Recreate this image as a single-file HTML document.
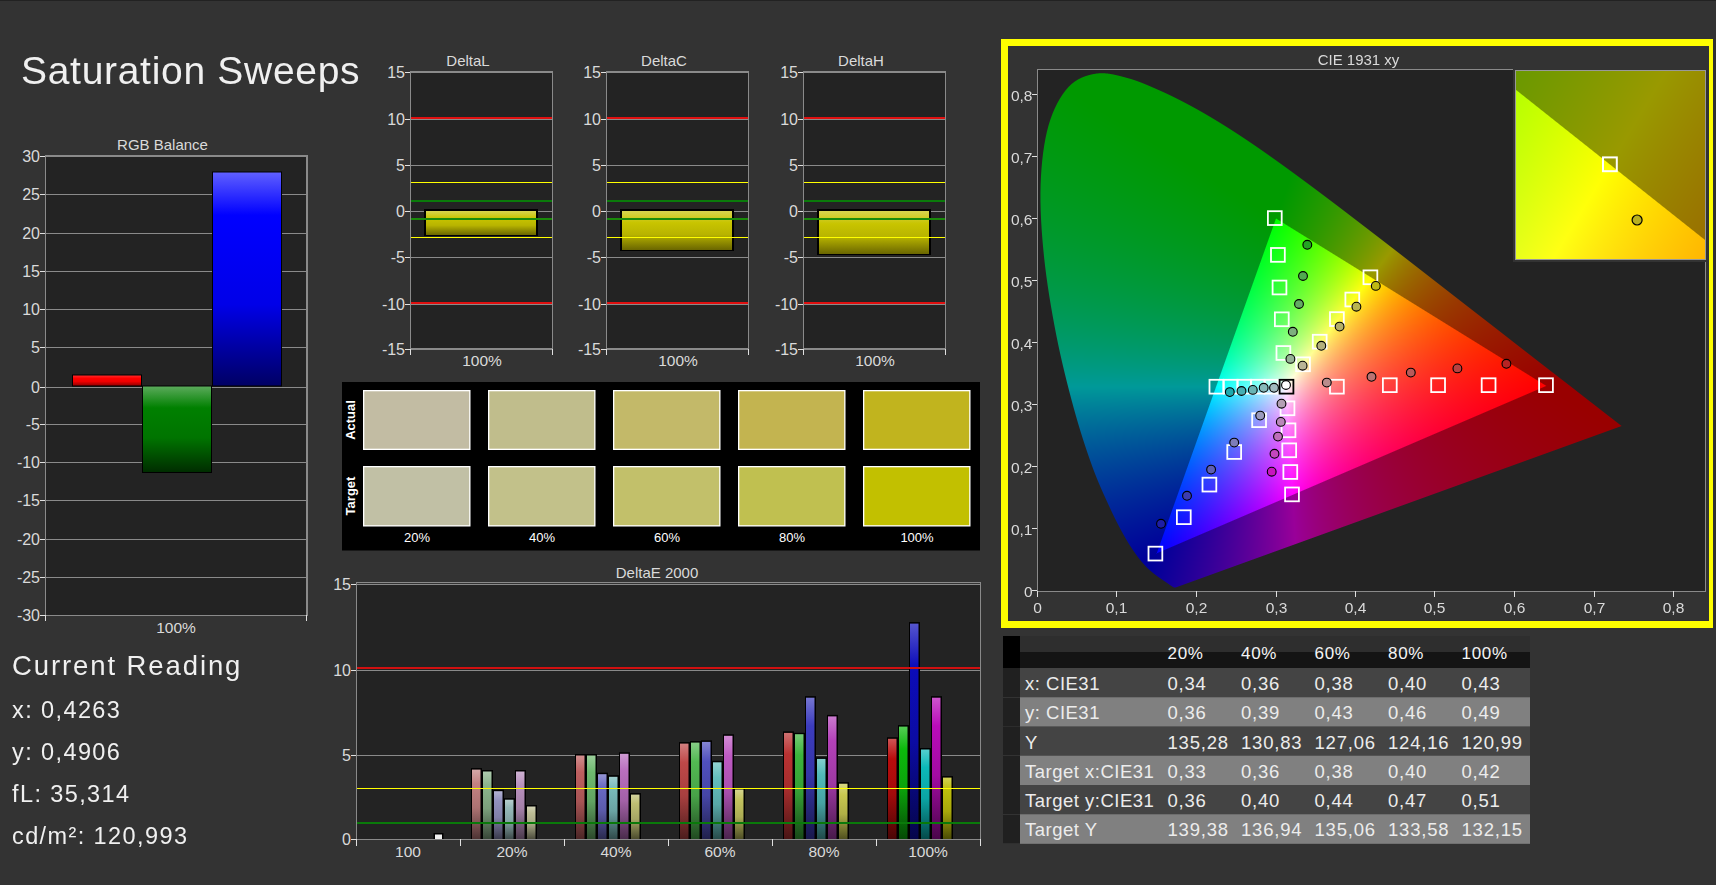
<!DOCTYPE html>
<html><head><meta charset="utf-8">
<style>
html,body{margin:0;padding:0;}
body{width:1716px;height:885px;background:#333333;position:relative;overflow:hidden;font-family:"Liberation Sans", sans-serif;}
.abs{position:absolute;left:0;top:0;}
svg text{font-family:"Liberation Sans", sans-serif;}
#topbar{position:absolute;left:0;top:0;width:1716px;height:1px;background:#222;}
#title{position:absolute;left:21px;top:48.5px;font-size:39px;color:#f0f0f0;white-space:nowrap;letter-spacing:0.7px;}
#cr{position:absolute;left:12px;top:650px;font-size:27.5px;color:#f0f0f0;white-space:nowrap;letter-spacing:1.9px;}
.rd{position:absolute;left:12px;font-size:23.5px;color:#f0f0f0;white-space:nowrap;letter-spacing:1.4px;}
#cie{position:absolute;left:1037px;top:69px;}
#inset{position:absolute;left:1515px;top:70px;}
</style></head><body>
<div id="topbar"></div>
<svg class="abs" width="1716" height="885">
<defs><linearGradient id="g1" x1="0" y1="0" x2="0" y2="1"><stop offset="0" stop-color="#ff2828"/><stop offset="0.3" stop-color="#ff0000"/><stop offset="0.6" stop-color="#ef0000"/><stop offset="1" stop-color="#960000"/></linearGradient><linearGradient id="g2" x1="0" y1="0" x2="0" y2="1"><stop offset="0" stop-color="#5aaa5a"/><stop offset="0.25" stop-color="#008000"/><stop offset="0.6" stop-color="#007400"/><stop offset="1" stop-color="#002d00"/></linearGradient><linearGradient id="g3" x1="0" y1="0" x2="0" y2="1"><stop offset="0" stop-color="#5f5fff"/><stop offset="0.2" stop-color="#0000ff"/><stop offset="0.62" stop-color="#0000e8"/><stop offset="1" stop-color="#000064"/></linearGradient><linearGradient id="g4" x1="0" y1="0" x2="0" y2="1"><stop offset="0" stop-color="#d8d450"/><stop offset="0.3" stop-color="#c8c400"/><stop offset="0.6" stop-color="#b8b400"/><stop offset="1" stop-color="#6a6600"/></linearGradient><linearGradient id="g5" x1="0" y1="0" x2="0" y2="1"><stop offset="0" stop-color="#d8d450"/><stop offset="0.3" stop-color="#c8c400"/><stop offset="0.6" stop-color="#b8b400"/><stop offset="1" stop-color="#6a6600"/></linearGradient><linearGradient id="g6" x1="0" y1="0" x2="0" y2="1"><stop offset="0" stop-color="#d8d450"/><stop offset="0.3" stop-color="#c8c400"/><stop offset="0.6" stop-color="#b8b400"/><stop offset="1" stop-color="#6a6600"/></linearGradient><linearGradient id="g7" x1="0" y1="0" x2="0" y2="1"><stop offset="0" stop-color="#d5a8a8"/><stop offset="0.2" stop-color="#c38282"/><stop offset="0.55" stop-color="#ac7272"/><stop offset="1" stop-color="#4e3434"/></linearGradient><linearGradient id="g8" x1="0" y1="0" x2="0" y2="1"><stop offset="0" stop-color="#aecaae"/><stop offset="0.2" stop-color="#8cb48c"/><stop offset="0.55" stop-color="#7b9e7b"/><stop offset="1" stop-color="#384838"/></linearGradient><linearGradient id="g9" x1="0" y1="0" x2="0" y2="1"><stop offset="0" stop-color="#b2b2d2"/><stop offset="0.2" stop-color="#9191be"/><stop offset="0.55" stop-color="#8080a7"/><stop offset="1" stop-color="#3a3a4c"/></linearGradient><linearGradient id="g10" x1="0" y1="0" x2="0" y2="1"><stop offset="0" stop-color="#b6cece"/><stop offset="0.2" stop-color="#96b9b9"/><stop offset="0.55" stop-color="#84a3a3"/><stop offset="1" stop-color="#3c4a4a"/></linearGradient><linearGradient id="g11" x1="0" y1="0" x2="0" y2="1"><stop offset="0" stop-color="#ceb2d2"/><stop offset="0.2" stop-color="#b991be"/><stop offset="0.55" stop-color="#a380a7"/><stop offset="1" stop-color="#4a3a4c"/></linearGradient><linearGradient id="g12" x1="0" y1="0" x2="0" y2="1"><stop offset="0" stop-color="#d2d2b6"/><stop offset="0.2" stop-color="#bebe96"/><stop offset="0.55" stop-color="#a7a784"/><stop offset="1" stop-color="#4c4c3c"/></linearGradient><linearGradient id="g13" x1="0" y1="0" x2="0" y2="1"><stop offset="0" stop-color="#d28f8f"/><stop offset="0.2" stop-color="#be5f5f"/><stop offset="0.55" stop-color="#a75454"/><stop offset="1" stop-color="#4c2626"/></linearGradient><linearGradient id="g14" x1="0" y1="0" x2="0" y2="1"><stop offset="0" stop-color="#9ace9a"/><stop offset="0.2" stop-color="#6eb96e"/><stop offset="0.55" stop-color="#61a361"/><stop offset="1" stop-color="#2c4a2c"/></linearGradient><linearGradient id="g15" x1="0" y1="0" x2="0" y2="1"><stop offset="0" stop-color="#9696d5"/><stop offset="0.2" stop-color="#6969c3"/><stop offset="0.55" stop-color="#5c5cac"/><stop offset="1" stop-color="#2a2a4e"/></linearGradient><linearGradient id="g16" x1="0" y1="0" x2="0" y2="1"><stop offset="0" stop-color="#a0cece"/><stop offset="0.2" stop-color="#78b9b9"/><stop offset="0.55" stop-color="#6aa3a3"/><stop offset="1" stop-color="#304a4a"/></linearGradient><linearGradient id="g17" x1="0" y1="0" x2="0" y2="1"><stop offset="0" stop-color="#ce9ad2"/><stop offset="0.2" stop-color="#b96ebe"/><stop offset="0.55" stop-color="#a361a7"/><stop offset="1" stop-color="#4a2c4c"/></linearGradient><linearGradient id="g18" x1="0" y1="0" x2="0" y2="1"><stop offset="0" stop-color="#d2d29d"/><stop offset="0.2" stop-color="#bebe73"/><stop offset="0.55" stop-color="#a7a765"/><stop offset="1" stop-color="#4c4c2e"/></linearGradient><linearGradient id="g19" x1="0" y1="0" x2="0" y2="1"><stop offset="0" stop-color="#d27f7f"/><stop offset="0.2" stop-color="#be4848"/><stop offset="0.55" stop-color="#a73f3f"/><stop offset="1" stop-color="#4c1d1d"/></linearGradient><linearGradient id="g20" x1="0" y1="0" x2="0" y2="1"><stop offset="0" stop-color="#86ce86"/><stop offset="0.2" stop-color="#52b952"/><stop offset="0.55" stop-color="#48a348"/><stop offset="1" stop-color="#214a21"/></linearGradient><linearGradient id="g21" x1="0" y1="0" x2="0" y2="1"><stop offset="0" stop-color="#8484d2"/><stop offset="0.2" stop-color="#5050be"/><stop offset="0.55" stop-color="#4646a7"/><stop offset="1" stop-color="#20204c"/></linearGradient><linearGradient id="g22" x1="0" y1="0" x2="0" y2="1"><stop offset="0" stop-color="#92d2d2"/><stop offset="0.2" stop-color="#64bebe"/><stop offset="0.55" stop-color="#58a7a7"/><stop offset="1" stop-color="#284c4c"/></linearGradient><linearGradient id="g23" x1="0" y1="0" x2="0" y2="1"><stop offset="0" stop-color="#d28cd5"/><stop offset="0.2" stop-color="#be5ac3"/><stop offset="0.55" stop-color="#a74fac"/><stop offset="1" stop-color="#4c244e"/></linearGradient><linearGradient id="g24" x1="0" y1="0" x2="0" y2="1"><stop offset="0" stop-color="#d5d58f"/><stop offset="0.2" stop-color="#c3c35f"/><stop offset="0.55" stop-color="#acac54"/><stop offset="1" stop-color="#4e4e26"/></linearGradient><linearGradient id="g25" x1="0" y1="0" x2="0" y2="1"><stop offset="0" stop-color="#ce7070"/><stop offset="0.2" stop-color="#b93232"/><stop offset="0.55" stop-color="#a32c2c"/><stop offset="1" stop-color="#4a1414"/></linearGradient><linearGradient id="g26" x1="0" y1="0" x2="0" y2="1"><stop offset="0" stop-color="#76ca76"/><stop offset="0.2" stop-color="#3cb43c"/><stop offset="0.55" stop-color="#359e35"/><stop offset="1" stop-color="#184818"/></linearGradient><linearGradient id="g27" x1="0" y1="0" x2="0" y2="1"><stop offset="0" stop-color="#7676d2"/><stop offset="0.2" stop-color="#3c3cbe"/><stop offset="0.55" stop-color="#3535a7"/><stop offset="1" stop-color="#18184c"/></linearGradient><linearGradient id="g28" x1="0" y1="0" x2="0" y2="1"><stop offset="0" stop-color="#84cece"/><stop offset="0.2" stop-color="#50b9b9"/><stop offset="0.55" stop-color="#46a3a3"/><stop offset="1" stop-color="#204a4a"/></linearGradient><linearGradient id="g29" x1="0" y1="0" x2="0" y2="1"><stop offset="0" stop-color="#ca7ace"/><stop offset="0.2" stop-color="#b441b9"/><stop offset="0.55" stop-color="#9e39a3"/><stop offset="1" stop-color="#481a4a"/></linearGradient><linearGradient id="g30" x1="0" y1="0" x2="0" y2="1"><stop offset="0" stop-color="#d8d884"/><stop offset="0.2" stop-color="#c8c850"/><stop offset="0.55" stop-color="#b0b046"/><stop offset="1" stop-color="#505020"/></linearGradient><linearGradient id="g31" x1="0" y1="0" x2="0" y2="1"><stop offset="0" stop-color="#ce5555"/><stop offset="0.2" stop-color="#b90c0c"/><stop offset="0.55" stop-color="#a30b0b"/><stop offset="1" stop-color="#4a0505"/></linearGradient><linearGradient id="g32" x1="0" y1="0" x2="0" y2="1"><stop offset="0" stop-color="#55ce55"/><stop offset="0.2" stop-color="#0cb90c"/><stop offset="0.55" stop-color="#0ba30b"/><stop offset="1" stop-color="#054a05"/></linearGradient><linearGradient id="g33" x1="0" y1="0" x2="0" y2="1"><stop offset="0" stop-color="#5555ce"/><stop offset="0.2" stop-color="#0c0cb9"/><stop offset="0.55" stop-color="#0b0ba3"/><stop offset="1" stop-color="#05054a"/></linearGradient><linearGradient id="g34" x1="0" y1="0" x2="0" y2="1"><stop offset="0" stop-color="#55cece"/><stop offset="0.2" stop-color="#0cb9b9"/><stop offset="0.55" stop-color="#0ba3a3"/><stop offset="1" stop-color="#054a4a"/></linearGradient><linearGradient id="g35" x1="0" y1="0" x2="0" y2="1"><stop offset="0" stop-color="#ce55ce"/><stop offset="0.2" stop-color="#b90cb9"/><stop offset="0.55" stop-color="#a30ba3"/><stop offset="1" stop-color="#4a054a"/></linearGradient><linearGradient id="g36" x1="0" y1="0" x2="0" y2="1"><stop offset="0" stop-color="#d2d255"/><stop offset="0.2" stop-color="#bebe0c"/><stop offset="0.55" stop-color="#a7a70b"/><stop offset="1" stop-color="#4c4c05"/></linearGradient></defs>
<rect x="45" y="156" width="262" height="459" fill="#232323"/>
<rect x="45" y="577" width="262" height="1" fill="#8a8a8a"/>
<rect x="45" y="539" width="262" height="1" fill="#8a8a8a"/>
<rect x="45" y="500" width="262" height="1" fill="#8a8a8a"/>
<rect x="45" y="462" width="262" height="1" fill="#8a8a8a"/>
<rect x="45" y="424" width="262" height="1" fill="#8a8a8a"/>
<rect x="45" y="387" width="262" height="1" fill="#8a8a8a"/>
<rect x="45" y="347" width="262" height="1" fill="#8a8a8a"/>
<rect x="45" y="309" width="262" height="1" fill="#8a8a8a"/>
<rect x="45" y="271" width="262" height="1" fill="#8a8a8a"/>
<rect x="45" y="233" width="262" height="1" fill="#8a8a8a"/>
<rect x="45" y="194" width="262" height="1" fill="#8a8a8a"/>
<rect x="72" y="374.5" width="70" height="12.0" fill="#000"/>
<rect x="73.0" y="375.5" width="68" height="10.0" fill="url(#g1)"/>
<rect x="142" y="385.5" width="70" height="87.5" fill="#000"/>
<rect x="143.0" y="386.5" width="68" height="85.5" fill="url(#g2)"/>
<rect x="212" y="171.5" width="70" height="215.0" fill="#000"/>
<rect x="213.0" y="172.5" width="68" height="213.0" fill="url(#g3)"/>
<rect x="45" y="155" width="263" height="2" fill="#8a8a8a"/>
<rect x="45" y="155" width="1" height="461" fill="#8a8a8a"/>
<rect x="306" y="155" width="2" height="461" fill="#8a8a8a"/>
<rect x="45" y="615" width="263" height="1" fill="#8a8a8a"/>
<rect x="40" y="615" width="5" height="1" fill="#e0e0e0"/>
<text x="40" y="621" font-size="16" text-anchor="end" fill="#dadada" >-30</text>
<rect x="40" y="577" width="5" height="1" fill="#e0e0e0"/>
<text x="40" y="583" font-size="16" text-anchor="end" fill="#dadada" >-25</text>
<rect x="40" y="539" width="5" height="1" fill="#e0e0e0"/>
<text x="40" y="545" font-size="16" text-anchor="end" fill="#dadada" >-20</text>
<rect x="40" y="500" width="5" height="1" fill="#e0e0e0"/>
<text x="40" y="506" font-size="16" text-anchor="end" fill="#dadada" >-15</text>
<rect x="40" y="462" width="5" height="1" fill="#e0e0e0"/>
<text x="40" y="468" font-size="16" text-anchor="end" fill="#dadada" >-10</text>
<rect x="40" y="424" width="5" height="1" fill="#e0e0e0"/>
<text x="40" y="430" font-size="16" text-anchor="end" fill="#dadada" >-5</text>
<rect x="40" y="387" width="5" height="1" fill="#e0e0e0"/>
<text x="40" y="393" font-size="16" text-anchor="end" fill="#dadada" >0</text>
<rect x="40" y="347" width="5" height="1" fill="#e0e0e0"/>
<text x="40" y="353" font-size="16" text-anchor="end" fill="#dadada" >5</text>
<rect x="40" y="309" width="5" height="1" fill="#e0e0e0"/>
<text x="40" y="315" font-size="16" text-anchor="end" fill="#dadada" >10</text>
<rect x="40" y="271" width="5" height="1" fill="#e0e0e0"/>
<text x="40" y="277" font-size="16" text-anchor="end" fill="#dadada" >15</text>
<rect x="40" y="233" width="5" height="1" fill="#e0e0e0"/>
<text x="40" y="239" font-size="16" text-anchor="end" fill="#dadada" >20</text>
<rect x="40" y="194" width="5" height="1" fill="#e0e0e0"/>
<text x="40" y="200" font-size="16" text-anchor="end" fill="#dadada" >25</text>
<rect x="40" y="156" width="5" height="1" fill="#e0e0e0"/>
<text x="40" y="162" font-size="16" text-anchor="end" fill="#dadada" >30</text>
<rect x="45" y="615" width="1" height="6" fill="#e0e0e0"/>
<rect x="306" y="615" width="1" height="6" fill="#e0e0e0"/>
<text x="176" y="632.5" font-size="15.5" text-anchor="middle" fill="#dadada" >100%</text>
<text x="162.5" y="150" font-size="15" text-anchor="middle" fill="#dadada" >RGB Balance</text>
<rect x="410" y="72" width="142" height="277" fill="#232323"/>
<rect x="410" y="119" width="142" height="1" fill="#8a8a8a"/>
<rect x="410" y="165" width="142" height="1" fill="#8a8a8a"/>
<rect x="410" y="211" width="142" height="1" fill="#8a8a8a"/>
<rect x="410" y="257" width="142" height="1" fill="#8a8a8a"/>
<rect x="410" y="304" width="142" height="1" fill="#8a8a8a"/>
<rect x="424" y="209" width="114" height="27" fill="#000"/>
<rect x="426" y="211" width="110" height="24" fill="url(#g4)"/>
<rect x="410" y="117" width="142" height="2" fill="#e01010"/>
<rect x="410" y="302" width="142" height="2" fill="#e01010"/>
<rect x="410" y="182" width="142" height="1" fill="#ffff00"/>
<rect x="410" y="237" width="142" height="1" fill="#ffff00"/>
<rect x="410" y="200" width="142" height="2" fill="#0a7a0a"/>
<rect x="410" y="218" width="142" height="2" fill="#1a8a0a"/>
<rect x="410" y="71" width="143" height="2" fill="#8a8a8a"/>
<rect x="410" y="71" width="1" height="279" fill="#8a8a8a"/>
<rect x="552" y="71" width="1" height="279" fill="#8a8a8a"/>
<rect x="410" y="348" width="143" height="2" fill="#8a8a8a"/>
<rect x="405" y="72" width="5" height="1" fill="#e0e0e0"/>
<text x="405" y="78" font-size="16" text-anchor="end" fill="#dadada" >15</text>
<rect x="405" y="119" width="5" height="1" fill="#e0e0e0"/>
<text x="405" y="125" font-size="16" text-anchor="end" fill="#dadada" >10</text>
<rect x="405" y="165" width="5" height="1" fill="#e0e0e0"/>
<text x="405" y="171" font-size="16" text-anchor="end" fill="#dadada" >5</text>
<rect x="405" y="211" width="5" height="1" fill="#e0e0e0"/>
<text x="405" y="217" font-size="16" text-anchor="end" fill="#dadada" >0</text>
<rect x="405" y="257" width="5" height="1" fill="#e0e0e0"/>
<text x="405" y="263" font-size="16" text-anchor="end" fill="#dadada" >-5</text>
<rect x="405" y="304" width="5" height="1" fill="#e0e0e0"/>
<text x="405" y="310" font-size="16" text-anchor="end" fill="#dadada" >-10</text>
<rect x="405" y="349" width="5" height="1" fill="#e0e0e0"/>
<text x="405" y="355" font-size="16" text-anchor="end" fill="#dadada" >-15</text>
<rect x="410" y="349" width="1" height="6" fill="#e0e0e0"/>
<rect x="552" y="349" width="1" height="6" fill="#e0e0e0"/>
<text x="482.0" y="365.5" font-size="15.5" text-anchor="middle" fill="#dadada" >100%</text>
<text x="468" y="66" font-size="15" text-anchor="middle" fill="#dadada" >DeltaL</text>
<rect x="606" y="72" width="142" height="277" fill="#232323"/>
<rect x="606" y="119" width="142" height="1" fill="#8a8a8a"/>
<rect x="606" y="165" width="142" height="1" fill="#8a8a8a"/>
<rect x="606" y="211" width="142" height="1" fill="#8a8a8a"/>
<rect x="606" y="257" width="142" height="1" fill="#8a8a8a"/>
<rect x="606" y="304" width="142" height="1" fill="#8a8a8a"/>
<rect x="620" y="209" width="114" height="42" fill="#000"/>
<rect x="622" y="211" width="110" height="39" fill="url(#g5)"/>
<rect x="606" y="117" width="142" height="2" fill="#e01010"/>
<rect x="606" y="302" width="142" height="2" fill="#e01010"/>
<rect x="606" y="182" width="142" height="1" fill="#ffff00"/>
<rect x="606" y="237" width="142" height="1" fill="#ffff00"/>
<rect x="606" y="200" width="142" height="2" fill="#0a7a0a"/>
<rect x="606" y="218" width="142" height="2" fill="#1a8a0a"/>
<rect x="606" y="71" width="143" height="2" fill="#8a8a8a"/>
<rect x="606" y="71" width="1" height="279" fill="#8a8a8a"/>
<rect x="748" y="71" width="1" height="279" fill="#8a8a8a"/>
<rect x="606" y="348" width="143" height="2" fill="#8a8a8a"/>
<rect x="601" y="72" width="5" height="1" fill="#e0e0e0"/>
<text x="601" y="78" font-size="16" text-anchor="end" fill="#dadada" >15</text>
<rect x="601" y="119" width="5" height="1" fill="#e0e0e0"/>
<text x="601" y="125" font-size="16" text-anchor="end" fill="#dadada" >10</text>
<rect x="601" y="165" width="5" height="1" fill="#e0e0e0"/>
<text x="601" y="171" font-size="16" text-anchor="end" fill="#dadada" >5</text>
<rect x="601" y="211" width="5" height="1" fill="#e0e0e0"/>
<text x="601" y="217" font-size="16" text-anchor="end" fill="#dadada" >0</text>
<rect x="601" y="257" width="5" height="1" fill="#e0e0e0"/>
<text x="601" y="263" font-size="16" text-anchor="end" fill="#dadada" >-5</text>
<rect x="601" y="304" width="5" height="1" fill="#e0e0e0"/>
<text x="601" y="310" font-size="16" text-anchor="end" fill="#dadada" >-10</text>
<rect x="601" y="349" width="5" height="1" fill="#e0e0e0"/>
<text x="601" y="355" font-size="16" text-anchor="end" fill="#dadada" >-15</text>
<rect x="606" y="349" width="1" height="6" fill="#e0e0e0"/>
<rect x="748" y="349" width="1" height="6" fill="#e0e0e0"/>
<text x="678.0" y="365.5" font-size="15.5" text-anchor="middle" fill="#dadada" >100%</text>
<text x="664" y="66" font-size="15" text-anchor="middle" fill="#dadada" >DeltaC</text>
<rect x="803" y="72" width="142" height="277" fill="#232323"/>
<rect x="803" y="119" width="142" height="1" fill="#8a8a8a"/>
<rect x="803" y="165" width="142" height="1" fill="#8a8a8a"/>
<rect x="803" y="211" width="142" height="1" fill="#8a8a8a"/>
<rect x="803" y="257" width="142" height="1" fill="#8a8a8a"/>
<rect x="803" y="304" width="142" height="1" fill="#8a8a8a"/>
<rect x="817" y="209" width="114" height="46" fill="#000"/>
<rect x="819" y="211" width="110" height="43" fill="url(#g6)"/>
<rect x="803" y="117" width="142" height="2" fill="#e01010"/>
<rect x="803" y="302" width="142" height="2" fill="#e01010"/>
<rect x="803" y="182" width="142" height="1" fill="#ffff00"/>
<rect x="803" y="237" width="142" height="1" fill="#ffff00"/>
<rect x="803" y="200" width="142" height="2" fill="#0a7a0a"/>
<rect x="803" y="218" width="142" height="2" fill="#1a8a0a"/>
<rect x="803" y="71" width="143" height="2" fill="#8a8a8a"/>
<rect x="803" y="71" width="1" height="279" fill="#8a8a8a"/>
<rect x="945" y="71" width="1" height="279" fill="#8a8a8a"/>
<rect x="803" y="348" width="143" height="2" fill="#8a8a8a"/>
<rect x="798" y="72" width="5" height="1" fill="#e0e0e0"/>
<text x="798" y="78" font-size="16" text-anchor="end" fill="#dadada" >15</text>
<rect x="798" y="119" width="5" height="1" fill="#e0e0e0"/>
<text x="798" y="125" font-size="16" text-anchor="end" fill="#dadada" >10</text>
<rect x="798" y="165" width="5" height="1" fill="#e0e0e0"/>
<text x="798" y="171" font-size="16" text-anchor="end" fill="#dadada" >5</text>
<rect x="798" y="211" width="5" height="1" fill="#e0e0e0"/>
<text x="798" y="217" font-size="16" text-anchor="end" fill="#dadada" >0</text>
<rect x="798" y="257" width="5" height="1" fill="#e0e0e0"/>
<text x="798" y="263" font-size="16" text-anchor="end" fill="#dadada" >-5</text>
<rect x="798" y="304" width="5" height="1" fill="#e0e0e0"/>
<text x="798" y="310" font-size="16" text-anchor="end" fill="#dadada" >-10</text>
<rect x="798" y="349" width="5" height="1" fill="#e0e0e0"/>
<text x="798" y="355" font-size="16" text-anchor="end" fill="#dadada" >-15</text>
<rect x="803" y="349" width="1" height="6" fill="#e0e0e0"/>
<rect x="945" y="349" width="1" height="6" fill="#e0e0e0"/>
<text x="875.0" y="365.5" font-size="15.5" text-anchor="middle" fill="#dadada" >100%</text>
<text x="861" y="66" font-size="15" text-anchor="middle" fill="#dadada" >DeltaH</text>
<rect x="342" y="382" width="638" height="168.5" fill="#000"/>
<rect x="363" y="390" width="107.5" height="60" fill="#fff"/>
<rect x="364.3" y="391.3" width="104.9" height="57.4" fill="#c2bca3"/>
<rect x="363" y="466" width="107.5" height="60.5" fill="#fff"/>
<rect x="364.3" y="467.3" width="104.9" height="57.9" fill="#c1c0a5"/>
<text x="417" y="541.5" font-size="13" text-anchor="middle" fill="#ffffff" >20%</text>
<rect x="488" y="390" width="107.5" height="60" fill="#fff"/>
<rect x="489.3" y="391.3" width="104.9" height="57.4" fill="#c0bd8c"/>
<rect x="488" y="466" width="107.5" height="60.5" fill="#fff"/>
<rect x="489.3" y="467.3" width="104.9" height="57.9" fill="#c2c18a"/>
<text x="542" y="541.5" font-size="13" text-anchor="middle" fill="#ffffff" >40%</text>
<rect x="613" y="390" width="107.5" height="60" fill="#fff"/>
<rect x="614.3" y="391.3" width="104.9" height="57.4" fill="#c3b969"/>
<rect x="613" y="466" width="107.5" height="60.5" fill="#fff"/>
<rect x="614.3" y="467.3" width="104.9" height="57.9" fill="#c2c06a"/>
<text x="667" y="541.5" font-size="13" text-anchor="middle" fill="#ffffff" >60%</text>
<rect x="738" y="390" width="107.5" height="60" fill="#fff"/>
<rect x="739.3" y="391.3" width="104.9" height="57.4" fill="#c3b450"/>
<rect x="738" y="466" width="107.5" height="60.5" fill="#fff"/>
<rect x="739.3" y="467.3" width="104.9" height="57.9" fill="#c0c050"/>
<text x="792" y="541.5" font-size="13" text-anchor="middle" fill="#ffffff" >80%</text>
<rect x="863" y="390" width="107.5" height="60" fill="#fff"/>
<rect x="864.3" y="391.3" width="104.9" height="57.4" fill="#c1b41e"/>
<rect x="863" y="466" width="107.5" height="60.5" fill="#fff"/>
<rect x="864.3" y="467.3" width="104.9" height="57.9" fill="#c2c000"/>
<text x="917" y="541.5" font-size="13" text-anchor="middle" fill="#ffffff" >100%</text>
<text transform="translate(354.5,420) rotate(-90)" font-size="13" font-weight="bold" text-anchor="middle" fill="#fff">Actual</text>
<text transform="translate(354.5,496) rotate(-90)" font-size="13" font-weight="bold" text-anchor="middle" fill="#fff">Target</text>
<rect x="356" y="584" width="624" height="255" fill="#232323"/>
<rect x="356" y="755" width="624" height="1" fill="#8a8a8a"/>
<rect x="356" y="670" width="624" height="1" fill="#8a8a8a"/>
<rect x="356" y="582" width="625" height="1" fill="#8a8a8a"/>
<rect x="356" y="584" width="625" height="1" fill="#8a8a8a"/>
<rect x="471" y="768.1" width="11" height="70.9" fill="#000"/>
<rect x="472" y="769.6" width="8.5" height="69.4" fill="url(#g7)"/>
<rect x="482" y="770.0" width="11" height="69.0" fill="#000"/>
<rect x="483" y="771.5" width="8.5" height="67.5" fill="url(#g8)"/>
<rect x="493" y="789.7" width="11" height="49.3" fill="#000"/>
<rect x="494" y="791.2" width="8.5" height="47.8" fill="url(#g9)"/>
<rect x="504" y="798.2" width="11" height="40.8" fill="#000"/>
<rect x="505" y="799.7" width="8.5" height="39.3" fill="url(#g10)"/>
<rect x="515" y="770.0" width="11" height="69.0" fill="#000"/>
<rect x="516" y="771.5" width="8.5" height="67.5" fill="url(#g11)"/>
<rect x="526" y="805.0" width="11" height="34.0" fill="#000"/>
<rect x="527" y="806.5" width="8.5" height="32.5" fill="url(#g12)"/>
<rect x="575" y="754.0" width="11" height="85.0" fill="#000"/>
<rect x="576" y="755.5" width="8.5" height="83.5" fill="url(#g13)"/>
<rect x="586" y="754.0" width="11" height="85.0" fill="#000"/>
<rect x="587" y="755.5" width="8.5" height="83.5" fill="url(#g14)"/>
<rect x="597" y="772.7" width="11" height="66.3" fill="#000"/>
<rect x="598" y="774.2" width="8.5" height="64.8" fill="url(#g15)"/>
<rect x="608" y="775.2" width="11" height="63.8" fill="#000"/>
<rect x="609" y="776.8" width="8.5" height="62.2" fill="url(#g16)"/>
<rect x="619" y="752.3" width="11" height="86.7" fill="#000"/>
<rect x="620" y="753.8" width="8.5" height="85.2" fill="url(#g17)"/>
<rect x="630" y="793.1" width="11" height="45.9" fill="#000"/>
<rect x="631" y="794.6" width="8.5" height="44.4" fill="url(#g18)"/>
<rect x="679" y="742.1" width="11" height="96.9" fill="#000"/>
<rect x="680" y="743.6" width="8.5" height="95.4" fill="url(#g19)"/>
<rect x="690" y="741.1" width="11" height="97.9" fill="#000"/>
<rect x="691" y="742.6" width="8.5" height="96.4" fill="url(#g20)"/>
<rect x="701" y="740.4" width="11" height="98.6" fill="#000"/>
<rect x="702" y="741.9" width="8.5" height="97.1" fill="url(#g21)"/>
<rect x="712" y="760.8" width="11" height="78.2" fill="#000"/>
<rect x="713" y="762.3" width="8.5" height="76.7" fill="url(#g22)"/>
<rect x="723" y="734.3" width="11" height="104.7" fill="#000"/>
<rect x="724" y="735.8" width="8.5" height="103.2" fill="url(#g23)"/>
<rect x="734" y="788.0" width="11" height="51.0" fill="#000"/>
<rect x="735" y="789.5" width="8.5" height="49.5" fill="url(#g24)"/>
<rect x="783" y="731.4" width="11" height="107.6" fill="#000"/>
<rect x="784" y="732.9" width="8.5" height="106.1" fill="url(#g25)"/>
<rect x="794" y="732.8" width="11" height="106.2" fill="#000"/>
<rect x="795" y="734.2" width="8.5" height="104.8" fill="url(#g26)"/>
<rect x="805" y="696.2" width="11" height="142.8" fill="#000"/>
<rect x="806" y="697.7" width="8.5" height="141.3" fill="url(#g27)"/>
<rect x="816" y="757.4" width="11" height="81.6" fill="#000"/>
<rect x="817" y="758.9" width="8.5" height="80.1" fill="url(#g28)"/>
<rect x="827" y="714.9" width="11" height="124.1" fill="#000"/>
<rect x="828" y="716.4" width="8.5" height="122.6" fill="url(#g29)"/>
<rect x="838" y="782.2" width="11" height="56.8" fill="#000"/>
<rect x="839" y="783.7" width="8.5" height="55.3" fill="url(#g30)"/>
<rect x="887" y="737.3" width="11" height="101.7" fill="#000"/>
<rect x="888" y="738.8" width="8.5" height="100.2" fill="url(#g31)"/>
<rect x="898" y="725.1" width="11" height="113.9" fill="#000"/>
<rect x="899" y="726.6" width="8.5" height="112.4" fill="url(#g32)"/>
<rect x="909" y="622.1" width="11" height="216.9" fill="#000"/>
<rect x="910" y="623.6" width="8.5" height="215.4" fill="url(#g33)"/>
<rect x="920" y="748.0" width="11" height="91.0" fill="#000"/>
<rect x="921" y="749.5" width="8.5" height="89.5" fill="url(#g34)"/>
<rect x="931" y="696.2" width="11" height="142.8" fill="#000"/>
<rect x="932" y="697.7" width="8.5" height="141.3" fill="url(#g35)"/>
<rect x="942" y="776.1" width="11" height="62.9" fill="#000"/>
<rect x="943" y="777.6" width="8.5" height="61.4" fill="url(#g36)"/>
<rect x="433.5" y="833" width="10" height="6" fill="#000"/>
<rect x="435" y="834.5" width="7" height="4.5" fill="#f0f0f0"/>
<rect x="356" y="667" width="624" height="2" fill="#d01010"/>
<rect x="356" y="788" width="624" height="1" fill="#ffff00"/>
<rect x="356" y="822" width="624" height="2" fill="#0a7a0a"/>
<rect x="356" y="582" width="1" height="258" fill="#8a8a8a"/>
<rect x="980" y="582" width="1" height="258" fill="#8a8a8a"/>
<rect x="356" y="839" width="625" height="1" fill="#8a8a8a"/>
<rect x="351" y="584" width="5" height="1" fill="#e0e0e0"/>
<text x="351" y="590" font-size="16" text-anchor="end" fill="#dadada" >15</text>
<rect x="351" y="670" width="5" height="1" fill="#e0e0e0"/>
<text x="351" y="676" font-size="16" text-anchor="end" fill="#dadada" >10</text>
<rect x="351" y="755" width="5" height="1" fill="#e0e0e0"/>
<text x="351" y="761" font-size="16" text-anchor="end" fill="#dadada" >5</text>
<rect x="351" y="839" width="5" height="1" fill="#e0e0e0"/>
<text x="351" y="845" font-size="16" text-anchor="end" fill="#dadada" >0</text>
<rect x="356" y="839" width="1" height="7" fill="#e0e0e0"/>
<rect x="460" y="839" width="1" height="7" fill="#e0e0e0"/>
<rect x="564" y="839" width="1" height="7" fill="#e0e0e0"/>
<rect x="668" y="839" width="1" height="7" fill="#e0e0e0"/>
<rect x="772" y="839" width="1" height="7" fill="#e0e0e0"/>
<rect x="876" y="839" width="1" height="7" fill="#e0e0e0"/>
<rect x="980" y="839" width="1" height="7" fill="#e0e0e0"/>
<text x="408" y="856.5" font-size="15.5" text-anchor="middle" fill="#dadada" >100</text>
<text x="512" y="856.5" font-size="15.5" text-anchor="middle" fill="#dadada" >20%</text>
<text x="616" y="856.5" font-size="15.5" text-anchor="middle" fill="#dadada" >40%</text>
<text x="720" y="856.5" font-size="15.5" text-anchor="middle" fill="#dadada" >60%</text>
<text x="824" y="856.5" font-size="15.5" text-anchor="middle" fill="#dadada" >80%</text>
<text x="928" y="856.5" font-size="15.5" text-anchor="middle" fill="#dadada" >100%</text>
<text x="657" y="578" font-size="15" text-anchor="middle" fill="#dadada" >DeltaE 2000</text>
<rect x="1001" y="39" width="712" height="7" fill="#ffff00"/>
<rect x="1001" y="621" width="712" height="7" fill="#ffff00"/>
<rect x="1001" y="39" width="7" height="589" fill="#ffff00"/>
<rect x="1709" y="39" width="4" height="589" fill="#ffff00"/>
<rect x="1037" y="69" width="668" height="522" fill="#232323"/>
<rect x="1003" y="636" width="527" height="16" fill="#2e2e2e"/>
<rect x="1003" y="652" width="527" height="16" fill="#141414"/>
<rect x="1003" y="636" width="17" height="32" fill="#000"/>
<text x="1167.5" y="659" font-size="17" letter-spacing="0.7" fill="#f4f4f4">20%</text>
<text x="1241" y="659" font-size="17" letter-spacing="0.7" fill="#f4f4f4">40%</text>
<text x="1314.5" y="659" font-size="17" letter-spacing="0.7" fill="#f4f4f4">60%</text>
<text x="1388" y="659" font-size="17" letter-spacing="0.7" fill="#f4f4f4">80%</text>
<text x="1461.5" y="659" font-size="17" letter-spacing="0.7" fill="#f4f4f4">100%</text>
<rect x="1003" y="668.00" width="527" height="29.55" fill="#444444"/>
<rect x="1003" y="668.00" width="17" height="29.55" fill="#202020"/>
<text x="1025" y="690.00" font-size="18.5" letter-spacing="0.5" fill="#ececec">x: CIE31</text>
<text x="1167.5" y="690.00" font-size="18.5" letter-spacing="0.8" fill="#ececec">0,34</text>
<text x="1241" y="690.00" font-size="18.5" letter-spacing="0.8" fill="#ececec">0,36</text>
<text x="1314.5" y="690.00" font-size="18.5" letter-spacing="0.8" fill="#ececec">0,38</text>
<text x="1388" y="690.00" font-size="18.5" letter-spacing="0.8" fill="#ececec">0,40</text>
<text x="1461.5" y="690.00" font-size="18.5" letter-spacing="0.8" fill="#ececec">0,43</text>
<rect x="1003" y="697.25" width="527" height="29.55" fill="#808080"/>
<rect x="1003" y="697.25" width="17" height="29.55" fill="#202020"/>
<text x="1025" y="719.25" font-size="18.5" letter-spacing="0.5" fill="#ececec">y: CIE31</text>
<text x="1167.5" y="719.25" font-size="18.5" letter-spacing="0.8" fill="#ececec">0,36</text>
<text x="1241" y="719.25" font-size="18.5" letter-spacing="0.8" fill="#ececec">0,39</text>
<text x="1314.5" y="719.25" font-size="18.5" letter-spacing="0.8" fill="#ececec">0,43</text>
<text x="1388" y="719.25" font-size="18.5" letter-spacing="0.8" fill="#ececec">0,46</text>
<text x="1461.5" y="719.25" font-size="18.5" letter-spacing="0.8" fill="#ececec">0,49</text>
<rect x="1003" y="726.50" width="527" height="29.55" fill="#444444"/>
<rect x="1003" y="726.50" width="17" height="29.55" fill="#202020"/>
<text x="1025" y="748.50" font-size="18.5" letter-spacing="0.5" fill="#ececec">Y</text>
<text x="1167.5" y="748.50" font-size="18.5" letter-spacing="0.8" fill="#ececec">135,28</text>
<text x="1241" y="748.50" font-size="18.5" letter-spacing="0.8" fill="#ececec">130,83</text>
<text x="1314.5" y="748.50" font-size="18.5" letter-spacing="0.8" fill="#ececec">127,06</text>
<text x="1388" y="748.50" font-size="18.5" letter-spacing="0.8" fill="#ececec">124,16</text>
<text x="1461.5" y="748.50" font-size="18.5" letter-spacing="0.8" fill="#ececec">120,99</text>
<rect x="1003" y="755.75" width="527" height="29.55" fill="#808080"/>
<rect x="1003" y="755.75" width="17" height="29.55" fill="#202020"/>
<text x="1025" y="777.75" font-size="18.5" letter-spacing="0.5" fill="#ececec">Target x:CIE31</text>
<text x="1167.5" y="777.75" font-size="18.5" letter-spacing="0.8" fill="#ececec">0,33</text>
<text x="1241" y="777.75" font-size="18.5" letter-spacing="0.8" fill="#ececec">0,36</text>
<text x="1314.5" y="777.75" font-size="18.5" letter-spacing="0.8" fill="#ececec">0,38</text>
<text x="1388" y="777.75" font-size="18.5" letter-spacing="0.8" fill="#ececec">0,40</text>
<text x="1461.5" y="777.75" font-size="18.5" letter-spacing="0.8" fill="#ececec">0,42</text>
<rect x="1003" y="785.00" width="527" height="29.55" fill="#444444"/>
<rect x="1003" y="785.00" width="17" height="29.55" fill="#202020"/>
<text x="1025" y="807.00" font-size="18.5" letter-spacing="0.5" fill="#ececec">Target y:CIE31</text>
<text x="1167.5" y="807.00" font-size="18.5" letter-spacing="0.8" fill="#ececec">0,36</text>
<text x="1241" y="807.00" font-size="18.5" letter-spacing="0.8" fill="#ececec">0,40</text>
<text x="1314.5" y="807.00" font-size="18.5" letter-spacing="0.8" fill="#ececec">0,44</text>
<text x="1388" y="807.00" font-size="18.5" letter-spacing="0.8" fill="#ececec">0,47</text>
<text x="1461.5" y="807.00" font-size="18.5" letter-spacing="0.8" fill="#ececec">0,51</text>
<rect x="1003" y="814.25" width="527" height="29.55" fill="#808080"/>
<rect x="1003" y="814.25" width="17" height="29.55" fill="#202020"/>
<text x="1025" y="836.25" font-size="18.5" letter-spacing="0.5" fill="#ececec">Target Y</text>
<text x="1167.5" y="836.25" font-size="18.5" letter-spacing="0.8" fill="#ececec">139,38</text>
<text x="1241" y="836.25" font-size="18.5" letter-spacing="0.8" fill="#ececec">136,94</text>
<text x="1314.5" y="836.25" font-size="18.5" letter-spacing="0.8" fill="#ececec">135,06</text>
<text x="1388" y="836.25" font-size="18.5" letter-spacing="0.8" fill="#ececec">133,58</text>
<text x="1461.5" y="836.25" font-size="18.5" letter-spacing="0.8" fill="#ececec">132,15</text>
</svg>
<div style="position:absolute;left:1037px;top:69px;width:668px;height:522px;clip-path:polygon(138.9px 518.4px,138.3px 518.5px,136.8px 518.3px,134.8px 517.2px,131.2px 514.7px,125.0px 510.5px,115.0px 503.1px,99.2px 485.7px,73.1px 439.2px,55.1px 397.1px,36.6px 338.6px,19.2px 265.6px,7.0px 187.7px,3.6px 115.5px,11.6px 56.4px,31.4px 18.1px,59.6px 4.5px,91.3px 9.3px,123.5px 21.8px,153.9px 36.9px,183.0px 53.8px,211.8px 72.4px,240.3px 92.3px,297.1px 134.3px,353.6px 177.6px,407.9px 219.8px,457.8px 258.5px,499.0px 290.6px,529.8px 314.4px,550.2px 330.4px,563.3px 340.5px,574.4px 347.3px,580.8px 354.1px,584.6px 357.0px);background:conic-gradient(from 0deg at 249.1px 317.5px,#008c00 0deg,#6a8c00 30deg,#8c5000 60deg,#8c0000 90deg,#8c0030 140deg,#7a008c 185deg,#10008c 218deg,#00408c 245deg,#008c88 270deg,#008c40 300deg,#008c00 330deg,#008c00 360deg)"></div><div style="position:absolute;left:1037px;top:69px;width:668px;height:522px;clip-path:polygon(509.3px 316.9px,239.0px 149.5px,119.8px 484.3px);background:radial-gradient(circle at 249.1px 317.5px,#ffffff 0px,rgba(255,255,255,0.6) 35px,rgba(255,255,255,0) 110px),conic-gradient(from 0deg at 249.1px 317.5px,#00ff00 0deg,#ffff00 38deg,#ff0000 90deg,#ff00ff 177deg,#0000ff 218deg,#00ffff 270deg,#00ff00 357deg,#00ff00 360deg)"></div>
<canvas id="cie" width="668" height="522"></canvas>
<div style="position:absolute;left:1513px;top:68px;width:195px;height:194px;background:#333"></div>
<div style="position:absolute;left:1515px;top:70px;width:189px;height:188px;border:1px solid #999;background:#232323"></div>
<div style="position:absolute;left:1516px;top:71px;width:189px;height:188px;clip-path:polygon(0px 0px,189px 0px,189px 168.9px,0px 18.9px);background:linear-gradient(45deg,#6a9400 0%,#8c9400 50%,#9a8a00 75%,#8a6a00 100%)"></div>
<div style="position:absolute;left:1516px;top:71px;width:189px;height:188px;clip-path:polygon(0px 18.9px,189px 168.9px,189px 188px,0px 188px);background:linear-gradient(60deg,#d0ff10 0%,#ffff10 40%,#ffd000 75%,#ffb000 100%)"></div>
<canvas id="inset" width="189" height="188" style="position:absolute;left:1516px;top:71px"></canvas>
<svg class="abs" width="1716" height="885">
<rect x="1037" y="69" width="476" height="1" fill="#8a8a8a"/>
<rect x="1037" y="69" width="1" height="523" fill="#8a8a8a"/>
<rect x="1037" y="591" width="669" height="1" fill="#8a8a8a"/>
<rect x="1705" y="262" width="1" height="330" fill="#8a8a8a"/>
<rect x="1037" y="591" width="1" height="6" fill="#e0e0e0"/>
<text x="1037.5" y="613" font-size="15.5" text-anchor="middle" fill="#dadada">0</text>
<rect x="1032" y="590" width="5" height="1" fill="#e0e0e0"/>
<text x="1032.5" y="596.5" font-size="15.5" text-anchor="end" fill="#dadada">0</text>
<rect x="1116" y="591" width="1" height="6" fill="#e0e0e0"/>
<text x="1116.5" y="613" font-size="15.5" text-anchor="middle" fill="#dadada">0,1</text>
<rect x="1032" y="528" width="5" height="1" fill="#e0e0e0"/>
<text x="1032.5" y="534.5" font-size="15.5" text-anchor="end" fill="#dadada">0,1</text>
<rect x="1196" y="591" width="1" height="6" fill="#e0e0e0"/>
<text x="1196.5" y="613" font-size="15.5" text-anchor="middle" fill="#dadada">0,2</text>
<rect x="1032" y="466" width="5" height="1" fill="#e0e0e0"/>
<text x="1032.5" y="472.5" font-size="15.5" text-anchor="end" fill="#dadada">0,2</text>
<rect x="1276" y="591" width="1" height="6" fill="#e0e0e0"/>
<text x="1276.5" y="613" font-size="15.5" text-anchor="middle" fill="#dadada">0,3</text>
<rect x="1032" y="404" width="5" height="1" fill="#e0e0e0"/>
<text x="1032.5" y="410.5" font-size="15.5" text-anchor="end" fill="#dadada">0,3</text>
<rect x="1355" y="591" width="1" height="6" fill="#e0e0e0"/>
<text x="1355.5" y="613" font-size="15.5" text-anchor="middle" fill="#dadada">0,4</text>
<rect x="1032" y="342" width="5" height="1" fill="#e0e0e0"/>
<text x="1032.5" y="348.5" font-size="15.5" text-anchor="end" fill="#dadada">0,4</text>
<rect x="1434" y="591" width="1" height="6" fill="#e0e0e0"/>
<text x="1434.5" y="613" font-size="15.5" text-anchor="middle" fill="#dadada">0,5</text>
<rect x="1032" y="280" width="5" height="1" fill="#e0e0e0"/>
<text x="1032.5" y="286.5" font-size="15.5" text-anchor="end" fill="#dadada">0,5</text>
<rect x="1514" y="591" width="1" height="6" fill="#e0e0e0"/>
<text x="1514.5" y="613" font-size="15.5" text-anchor="middle" fill="#dadada">0,6</text>
<rect x="1032" y="218" width="5" height="1" fill="#e0e0e0"/>
<text x="1032.5" y="224.5" font-size="15.5" text-anchor="end" fill="#dadada">0,6</text>
<rect x="1594" y="591" width="1" height="6" fill="#e0e0e0"/>
<text x="1594.5" y="613" font-size="15.5" text-anchor="middle" fill="#dadada">0,7</text>
<rect x="1032" y="156" width="5" height="1" fill="#e0e0e0"/>
<text x="1032.5" y="162.5" font-size="15.5" text-anchor="end" fill="#dadada">0,7</text>
<rect x="1673" y="591" width="1" height="6" fill="#e0e0e0"/>
<text x="1673.5" y="613" font-size="15.5" text-anchor="middle" fill="#dadada">0,8</text>
<rect x="1032" y="94" width="5" height="1" fill="#e0e0e0"/>
<text x="1032.5" y="100.5" font-size="15.5" text-anchor="end" fill="#dadada">0,8</text>
<text x="1358.5" y="65" font-size="15" text-anchor="middle" fill="#dadada">CIE 1931 xy</text>
<rect x="1267.9" y="211.2" width="13.8" height="13.8" fill="none" stroke="#ffffff" stroke-width="1.8"/>
<rect x="1271.0" y="248.0" width="13.8" height="13.8" fill="none" stroke="#ffffff" stroke-width="1.8"/>
<rect x="1272.6" y="280.6" width="13.8" height="13.8" fill="none" stroke="#ffffff" stroke-width="1.8"/>
<rect x="1274.9" y="312.4" width="13.8" height="13.8" fill="none" stroke="#ffffff" stroke-width="1.8"/>
<rect x="1276.5" y="346.1" width="13.8" height="13.8" fill="none" stroke="#ffffff" stroke-width="1.8"/>
<rect x="1363.5" y="270.4" width="13.8" height="13.8" fill="none" stroke="#ffffff" stroke-width="1.8"/>
<rect x="1345.4" y="292.6" width="13.8" height="13.8" fill="none" stroke="#ffffff" stroke-width="1.8"/>
<rect x="1330.0" y="312.2" width="13.8" height="13.8" fill="none" stroke="#ffffff" stroke-width="1.8"/>
<rect x="1312.8" y="334.8" width="13.8" height="13.8" fill="none" stroke="#ffffff" stroke-width="1.8"/>
<rect x="1296.1" y="357.4" width="13.8" height="13.8" fill="none" stroke="#ffffff" stroke-width="1.8"/>
<rect x="1209.5" y="379.8" width="13.8" height="13.8" fill="none" stroke="#ffffff" stroke-width="1.8"/>
<rect x="1223.8" y="379.8" width="13.8" height="13.8" fill="none" stroke="#ffffff" stroke-width="1.8"/>
<rect x="1237.4" y="379.8" width="13.8" height="13.8" fill="none" stroke="#ffffff" stroke-width="1.8"/>
<rect x="1250.9" y="379.8" width="13.8" height="13.8" fill="none" stroke="#ffffff" stroke-width="1.8"/>
<rect x="1264.5" y="379.8" width="13.8" height="13.8" fill="none" stroke="#ffffff" stroke-width="1.8"/>
<rect x="1330.0" y="379.8" width="13.8" height="13.8" fill="none" stroke="#ffffff" stroke-width="1.8"/>
<rect x="1382.9" y="378.3" width="13.8" height="13.8" fill="none" stroke="#ffffff" stroke-width="1.8"/>
<rect x="1431.2" y="378.3" width="13.8" height="13.8" fill="none" stroke="#ffffff" stroke-width="1.8"/>
<rect x="1481.7" y="378.3" width="13.8" height="13.8" fill="none" stroke="#ffffff" stroke-width="1.8"/>
<rect x="1539.1" y="378.3" width="13.8" height="13.8" fill="none" stroke="#ffffff" stroke-width="1.8"/>
<rect x="1148.5" y="546.7" width="13.8" height="13.8" fill="none" stroke="#ffffff" stroke-width="1.8"/>
<rect x="1176.9" y="510.3" width="13.8" height="13.8" fill="none" stroke="#ffffff" stroke-width="1.8"/>
<rect x="1202.5" y="477.7" width="13.8" height="13.8" fill="none" stroke="#ffffff" stroke-width="1.8"/>
<rect x="1227.3" y="445.1" width="13.8" height="13.8" fill="none" stroke="#ffffff" stroke-width="1.8"/>
<rect x="1252.2" y="413.3" width="13.8" height="13.8" fill="none" stroke="#ffffff" stroke-width="1.8"/>
<rect x="1285.1" y="487.5" width="13.8" height="13.8" fill="none" stroke="#ffffff" stroke-width="1.8"/>
<rect x="1283.4" y="465.1" width="13.8" height="13.8" fill="none" stroke="#ffffff" stroke-width="1.8"/>
<rect x="1282.3" y="443.4" width="13.8" height="13.8" fill="none" stroke="#ffffff" stroke-width="1.8"/>
<rect x="1281.6" y="423.4" width="13.8" height="13.8" fill="none" stroke="#ffffff" stroke-width="1.8"/>
<rect x="1280.6" y="401.4" width="13.8" height="13.8" fill="none" stroke="#ffffff" stroke-width="1.8"/>
<rect x="1279.6" y="379.8" width="13.8" height="13.8" fill="none" stroke="#000000" stroke-width="1.8"/>
<circle cx="1307.3" cy="244.8" r="4.4" fill="#23a523" stroke="#000" stroke-width="1.1"/>
<circle cx="1303.0" cy="276.0" r="4.4" fill="#50aa50" stroke="#000" stroke-width="1.1"/>
<circle cx="1299.0" cy="304.0" r="4.4" fill="#64aa64" stroke="#000" stroke-width="1.1"/>
<circle cx="1292.8" cy="331.8" r="4.4" fill="#7daf7d" stroke="#000" stroke-width="1.1"/>
<circle cx="1290.4" cy="358.9" r="4.4" fill="#96b496" stroke="#000" stroke-width="1.1"/>
<circle cx="1375.8" cy="285.9" r="4.4" fill="#beb914" stroke="#000" stroke-width="1.1"/>
<circle cx="1356.4" cy="306.7" r="4.4" fill="#b9b450" stroke="#000" stroke-width="1.1"/>
<circle cx="1339.6" cy="326.6" r="4.4" fill="#b4af69" stroke="#000" stroke-width="1.1"/>
<circle cx="1321.3" cy="345.8" r="4.4" fill="#b4af7d" stroke="#000" stroke-width="1.1"/>
<circle cx="1302.6" cy="365.7" r="4.4" fill="#b9b496" stroke="#000" stroke-width="1.1"/>
<circle cx="1229.8" cy="392.1" r="4.4" fill="#1eaaaf" stroke="#000" stroke-width="1.1"/>
<circle cx="1241.5" cy="391.0" r="4.4" fill="#46afb4" stroke="#000" stroke-width="1.1"/>
<circle cx="1252.8" cy="389.9" r="4.4" fill="#69b4b4" stroke="#000" stroke-width="1.1"/>
<circle cx="1263.7" cy="387.8" r="4.4" fill="#87b9b9" stroke="#000" stroke-width="1.1"/>
<circle cx="1274.0" cy="387.8" r="4.4" fill="#a0b9be" stroke="#000" stroke-width="1.1"/>
<circle cx="1326.8" cy="382.6" r="4.4" fill="#b98c8c" stroke="#000" stroke-width="1.1"/>
<circle cx="1371.5" cy="376.8" r="4.4" fill="#b97373" stroke="#000" stroke-width="1.1"/>
<circle cx="1410.8" cy="372.6" r="4.4" fill="#b95a5a" stroke="#000" stroke-width="1.1"/>
<circle cx="1457.4" cy="368.4" r="4.4" fill="#b94141" stroke="#000" stroke-width="1.1"/>
<circle cx="1506.4" cy="363.8" r="4.4" fill="#b92323" stroke="#000" stroke-width="1.1"/>
<circle cx="1161.0" cy="523.8" r="4.4" fill="#1e1ea5" stroke="#000" stroke-width="1.1"/>
<circle cx="1187.0" cy="495.8" r="4.4" fill="#3c3caf" stroke="#000" stroke-width="1.1"/>
<circle cx="1211.1" cy="469.6" r="4.4" fill="#5f5fb4" stroke="#000" stroke-width="1.1"/>
<circle cx="1234.2" cy="442.6" r="4.4" fill="#7d7db9" stroke="#000" stroke-width="1.1"/>
<circle cx="1260.2" cy="415.6" r="4.4" fill="#9b9bbe" stroke="#000" stroke-width="1.1"/>
<circle cx="1271.7" cy="471.7" r="4.4" fill="#c814be" stroke="#000" stroke-width="1.1"/>
<circle cx="1274.5" cy="453.8" r="4.4" fill="#c346be" stroke="#000" stroke-width="1.1"/>
<circle cx="1278.0" cy="436.6" r="4.4" fill="#be6eb9" stroke="#000" stroke-width="1.1"/>
<circle cx="1280.8" cy="421.9" r="4.4" fill="#b987b9" stroke="#000" stroke-width="1.1"/>
<circle cx="1281.5" cy="403.7" r="4.4" fill="#b4a0b4" stroke="#000" stroke-width="1.1"/>
<circle cx="1286.0" cy="385.0" r="4.4" fill="#ffffff" stroke="#000" stroke-width="1.1"/>
</svg>
<svg class="abs" width="1716" height="885">
<rect x="1603" y="157.4" width="13.8" height="13.8" fill="none" stroke="#fff" stroke-width="2"/>
<circle cx="1637.1" cy="220" r="5" fill="#b8b020" stroke="#000" stroke-width="1.2"/>
</svg>
<div id="title">Saturation Sweeps</div>
<div id="cr">Current Reading</div>
<div class="rd" style="top:696.5px">x: 0,4263</div>
<div class="rd" style="top:738.5px">y: 0,4906</div>
<div class="rd" style="top:780.5px">fL: 35,314</div>
<div class="rd" style="top:822.5px">cd/m²: 120,993</div>
<script>
(function(){
var L=[[0.1741,0.0050],[0.1740,0.0050],[0.1738,0.0049],[0.1736,0.0049],[0.1733,0.0048],[0.1730,0.0048],[0.1726,0.0048],[0.1721,0.0048],[0.1714,0.0051],[0.1703,0.0058],[0.1689,0.0069],[0.1669,0.0086],[0.1644,0.0109],[0.1611,0.0138],[0.1566,0.0177],[0.1510,0.0227],[0.1440,0.0297],[0.1355,0.0399],[0.1241,0.0578],[0.1096,0.0868],[0.0913,0.1327],[0.0687,0.2007],[0.0454,0.2950],[0.0235,0.4127],[0.0082,0.5384],[0.0039,0.6548],[0.0139,0.7502],[0.0389,0.8120],[0.0743,0.8338],[0.1142,0.8262],[0.1547,0.8059],[0.1929,0.7816],[0.2296,0.7543],[0.2658,0.7243],[0.3016,0.6923],[0.3373,0.6589],[0.3731,0.6245],[0.4087,0.5896],[0.4441,0.5547],[0.4788,0.5202],[0.5125,0.4866],[0.5448,0.4544],[0.5752,0.4242],[0.6029,0.3965],[0.6270,0.3725],[0.6482,0.3514],[0.6658,0.3340],[0.6801,0.3197],[0.6915,0.3083],[0.7006,0.2993],[0.7079,0.2920],[0.7140,0.2859],[0.7190,0.2809],[0.7230,0.2770],[0.7260,0.2740],[0.7283,0.2717],[0.7300,0.2700],[0.7311,0.2689],[0.7320,0.2680],[0.7327,0.2673],[0.7334,0.2666],[0.7340,0.2660],[0.7344,0.2656],[0.7346,0.2654],[0.7347,0.2653]];
var TR=[[0.64,0.33],[0.30,0.60],[0.15,0.06]];
(function(){var o=[];var n=L.length;for(var i=0;i<n-1;i++){var p0=L[Math.max(0,i-1)],p1=L[i],p2=L[i+1],p3=L[Math.min(n-1,i+2)];
for(var s=0;s<8;s++){var t=s/8,t2=t*t,t3=t2*t;var x=0.5*((2*p1[0])+(-p0[0]+p2[0])*t+(2*p0[0]-5*p1[0]+4*p2[0]-p3[0])*t2+(-p0[0]+3*p1[0]-3*p2[0]+p3[0])*t3);
var y=0.5*((2*p1[1])+(-p0[1]+p2[1])*t+(2*p0[1]-5*p1[1]+4*p2[1]-p3[1])*t2+(-p0[1]+3*p1[1]-3*p2[1]+p3[1])*t3);o.push([x,y]);}}
o.push(L[n-1]);L=o;})();
var DIM=0.6;
function col(x,y,out){
  if(y<0.0005)y=0.0005;
  var X=x/y, Z=(1-x-y)/y;
  var r=3.2406*X-1.5372-0.4986*Z;
  var g=-0.9689*X+1.8758+0.0415*Z;
  var b=0.0557*X-0.2040+1.0570*Z;
  if(r<0)r=0; if(g<0)g=0; if(b<0)b=0;
  var m=Math.max(r,g,b); if(m<=0)m=1;
  out[0]=r/m; out[1]=g/m; out[2]=b/m;
}
function render(id, W, H, toXY, toPx){
  var c=document.getElementById(id); if(!c)return;
  var ctx=c.getContext('2d');
  var img=ctx.createImageData(W,H);
  var d=img.data;
  // polygon in pixel coordinates
  var P=[]; for(var i=0;i<L.length;i++){P.push(toPx(L[i][0],L[i][1]));}
  var T=[]; for(i=0;i<3;i++){T.push(toPx(TR[i][0],TR[i][1]));}
  // triangle edge functions (pixel space), orientation
  var area=(T[1][0]-T[0][0])*(T[2][1]-T[0][1])-(T[1][1]-T[0][1])*(T[2][0]-T[0][0]);
  var sgn=area>0?1:-1;
  var E=[];
  for(i=0;i<3;i++){var p=T[i],q=T[(i+1)%3];var ex=q[0]-p[0],ey=q[1]-p[1];var len=Math.sqrt(ex*ex+ey*ey);E.push([p[0],p[1],ex/len,ey/len]);}
  var cov=new Float32Array(W);
  var SUB=4;
  var rgb=[0,0,0];
  for(var j=0;j<H;j++){
    for(i=0;i<W;i++)cov[i]=0;
    for(var s=0;s<SUB;s++){
      var yy=j+(s+0.5)/SUB;
      var xs=[];
      var n=P.length;
      for(var k=0;k<n;k++){
        var a=P[k],bb=P[(k+1)%n];
        if((a[1]<=yy&&bb[1]>yy)||(bb[1]<=yy&&a[1]>yy)){
          xs.push(a[0]+(yy-a[1])*(bb[0]-a[0])/(bb[1]-a[1]));
        }
      }
      xs.sort(function(u,v){return u-v;});
      for(k=0;k+1<xs.length;k+=2){
        var x0=Math.max(0,xs[k]), x1=Math.min(W,xs[k+1]);
        if(x1<=x0)continue;
        var i0=Math.floor(x0), i1=Math.floor(x1);
        if(i0===i1){cov[i0]+=(x1-x0)/SUB;}
        else{
          cov[i0]+=(i0+1-x0)/SUB;
          for(var q=i0+1;q<i1;q++)cov[q]+=1/SUB;
          if(i1<W)cov[i1]+=(x1-i1)/SUB;
        }
      }
    }
    for(i=0;i<W;i++){
      var o=(j*W+i)*4;
      var cv=cov[i];
      if(cv<=0.001){d[o]=35;d[o+1]=35;d[o+2]=35;d[o+3]=255;continue;}
      if(cv>1)cv=1;
      var px=i+0.5, py=j+0.5;
      var xy=toXY(px,py);
      col(xy[0],xy[1],rgb);
      // triangle inside amount
      var md=1e9;
      for(k=0;k<3;k++){var e=E[k];var dd=((px-e[0])*e[3]-(py-e[1])*e[2])*(-sgn); if(dd<md)md=dd;}
      var ins=md+0.5; if(ins<0)ins=0; if(ins>1)ins=1;
      var f=DIM+(1-DIM)*ins;
      var R=rgb[0]*255*f, G=rgb[1]*255*f, B=rgb[2]*255*f;
      d[o]=Math.round(35+(R-35)*cv);
      d[o+1]=Math.round(35+(G-35)*cv);
      d[o+2]=Math.round(35+(B-35)*cv);
      d[o+3]=255;
    }
  }
  ctx.putImageData(img,0,0);
}
// main: canvas at page (1037,69)
render('cie',668,522,function(px,py){return [(1037+px-1037.5)/795,(590.5-(69+py))/620];},
  function(x,y){return [1037.5+795*x-1037, 590.5-620*y-69];});
// inset: canvas at page (1516,71)
var S=3800, X0=0.4193, Y0=0.5053, PX=1609.9, PY=164.3;
render('inset',189,188,function(px,py){return [X0+(1516+px-PX)/S, Y0-(71+py-PY)/S];},
  function(x,y){return [PX+(x-X0)*S-1516, PY-(y-Y0)*S-71];});
})();

</script>
</body></html>
